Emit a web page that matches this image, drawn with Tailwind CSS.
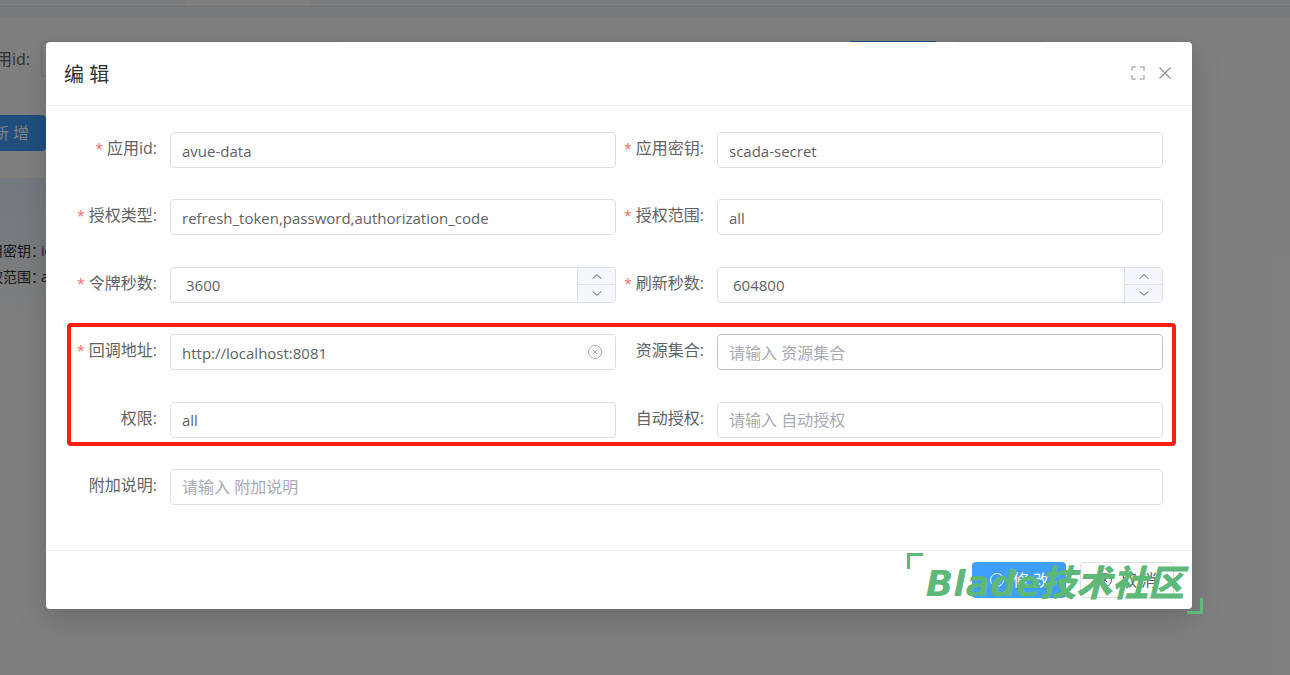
<!DOCTYPE html>
<html lang="zh-CN">
<head>
    <meta charset="UTF-8">
    <meta name="viewport" content="width=device-width, initial-scale=1.0">
    <title>应用管理</title>
    <script src="https://cdn.jsdelivr.net/npm/@tailwindcss/browser@4"></script>
</head>
<body class="relative min-h-screen overflow-hidden bg-white font-['Open_Sans','Noto_Sans_CJK_SC',sans-serif] text-base text-[#606266]">

    <!-- Page behind the dialog -->
    <div class="h-[6px] bg-[#f5f9fd] pl-[185px]">
        <div class="h-[7px] w-[126px] bg-white"></div>
    </div>
    <div class="h-3 border-t border-[#e4e7ed] bg-[#f0f2f5]"></div>
    <main>
        <div class="mt-[23px] flex h-9 items-center justify-between">
            <div class="flex items-center gap-[13px]">
                <label for="searchId" class="-ml-[20px] whitespace-nowrap">应用id:</label>
                <input id="searchId" class="-ml-[2px] h-9 w-[300px] rounded border border-[#dcdfe6]">
            </div>
            <div class="mr-[246px] flex gap-4">
                <button class="h-9 w-[90px] rounded bg-[#409eff] text-white">搜 索</button>
                <button class="h-9 w-[90px] rounded border border-[#dcdfe6]">清 空</button>
            </div>
        </div>
        <button class="mt-[38px] -ml-12 flex h-9 w-[94px] items-center justify-end rounded bg-[#409eff] pr-[17px] whitespace-nowrap text-white">新 增</button>
        <div class="mt-[27px] h-[60px] w-3/4 bg-linear-to-b from-[#eaf3fe] to-[#f0f5fc]"></div>
        <div class="h-[92px] w-3/4 bg-linear-to-b from-[#f0f5fc] to-white text-sm leading-[26px] text-[#303133]">
            <p class="-ml-[11px]"><span class="inline-block w-[52px] whitespace-nowrap">用密钥：</span>id</p>
            <p class="-ml-[11px]"><span class="inline-block w-[52px] whitespace-nowrap">权范围：</span>all</p>
        </div>
    </main>

    <!-- Mask and dialog -->
    <div class="absolute inset-0 bg-black/50 pt-[42px] pr-[98px] pl-[46px]">
        <form class="relative rounded-sm bg-white shadow-[0_12px_32px_4px_rgba(0,0,0,0.08),0_8px_20px_rgba(0,0,0,0.08)]">
            <header class="flex h-16 items-center justify-between border-b border-[#f0f0f0] pr-5 pl-[18px]">
                <h1 class="pt-[3px] text-xl text-[#303133]">编 辑</h1>
                <div class="flex gap-[13px] pb-[2px] text-[#909399]">
                    <button type="button" aria-label="全屏">
                        <svg class="size-[14px]" viewBox="0 0 14 14" fill="none" stroke="#b4b6b9" stroke-width="1.5"><path d="M1 5V1h4M9 1h4v4M13 9v4H9M5 13H1V9"/></svg>
                    </button>
                    <button type="button" aria-label="关闭">
                        <svg class="size-[14px]" viewBox="0 0 14 14" fill="none" stroke="currentColor" stroke-width="1.2"><path d="M1.500 1.500l11 11M12.500 1.500l-11 11"/></svg>
                    </button>
                </div>
            </header>

            <div class="grid min-h-[444px] grid-cols-2 content-between gap-x-px pt-[26px] pr-[29px] pb-[45px] pl-6">
                <div class="flex">
                    <label for="clientId" class="w-[100px] shrink-0 pr-[13px] text-right leading-8"><span class="mr-1 text-sm text-[#f56c6c]">*</span>应用id:</label>
                    <input id="clientId" value="avue-data" class="h-9 w-full min-w-0 rounded border border-[#dcdfe6] px-[11px] pt-px text-[15px] outline-none">
                </div>
                <div class="flex">
                    <label for="clientSecret" class="w-[100px] shrink-0 pr-[13px] text-right leading-8"><span class="mr-1 text-sm text-[#f56c6c]">*</span>应用密钥:</label>
                    <input id="clientSecret" value="scada-secret" class="h-9 w-full min-w-0 rounded border border-[#dcdfe6] px-[11px] pt-px text-[15px] outline-none">
                </div>

                <div class="flex">
                    <label for="grantTypes" class="w-[100px] shrink-0 pr-[13px] text-right leading-8"><span class="mr-1 text-sm text-[#f56c6c]">*</span>授权类型:</label>
                    <input id="grantTypes" value="refresh_token,password,authorization_code" class="h-9 w-full min-w-0 rounded border border-[#dcdfe6] px-[11px] pt-px text-[15px] outline-none">
                </div>
                <div class="flex">
                    <label for="scope" class="w-[100px] shrink-0 pr-[13px] text-right leading-8"><span class="mr-1 text-sm text-[#f56c6c]">*</span>授权范围:</label>
                    <input id="scope" value="all" class="h-9 w-full min-w-0 rounded border border-[#dcdfe6] px-[11px] pt-px text-[15px] outline-none">
                </div>

                <div class="flex">
                    <label for="accessToken" class="w-[100px] shrink-0 pr-[13px] text-right leading-8"><span class="mr-1 text-sm text-[#f56c6c]">*</span>令牌秒数:</label>
                    <div class="flex h-9 w-full min-w-0 overflow-hidden rounded border border-[#dcdfe6]">
                        <input id="accessToken" value="3600" class="w-full min-w-0 px-[15px] pt-px text-[15px] outline-none">
                        <div class="flex w-[38px] shrink-0 flex-col border-l border-[#dcdfe6] bg-[#f5f7fa]">
                            <button type="button" aria-label="增加" class="flex flex-1 items-center justify-center border-b border-[#dcdfe6]"><svg class="h-[5px] w-[10px]" viewBox="0 0 10 5" fill="none" stroke="currentColor"><path d="M.5 4.700L5 .700l4.500 4"/></svg></button>
                            <button type="button" aria-label="减少" class="flex flex-1 items-center justify-center"><svg class="h-[5px] w-[10px]" viewBox="0 0 10 5" fill="none" stroke="currentColor"><path d="M.5 .300L5 4.300l4.500-4"/></svg></button>
                        </div>
                    </div>
                </div>
                <div class="flex">
                    <label for="refreshToken" class="w-[100px] shrink-0 pr-[13px] text-right leading-8"><span class="mr-1 text-sm text-[#f56c6c]">*</span>刷新秒数:</label>
                    <div class="flex h-9 w-full min-w-0 overflow-hidden rounded border border-[#dcdfe6]">
                        <input id="refreshToken" value="604800" class="w-full min-w-0 px-[15px] pt-px text-[15px] outline-none">
                        <div class="flex w-[38px] shrink-0 flex-col border-l border-[#dcdfe6] bg-[#f5f7fa]">
                            <button type="button" aria-label="增加" class="flex flex-1 items-center justify-center border-b border-[#dcdfe6]"><svg class="h-[5px] w-[10px]" viewBox="0 0 10 5" fill="none" stroke="currentColor"><path d="M.5 4.700L5 .700l4.500 4"/></svg></button>
                            <button type="button" aria-label="减少" class="flex flex-1 items-center justify-center"><svg class="h-[5px] w-[10px]" viewBox="0 0 10 5" fill="none" stroke="currentColor"><path d="M.5 .300L5 4.300l4.500-4"/></svg></button>
                        </div>
                    </div>
                </div>

                <div class="flex">
                    <label for="redirectUri" class="w-[100px] shrink-0 pr-[13px] text-right leading-8"><span class="mr-1 text-sm text-[#f56c6c]">*</span>回调地址:</label>
                    <div class="flex h-9 w-full min-w-0 items-center rounded border border-[#dcdfe6] pr-3">
                        <input id="redirectUri" value="http://localhost:8081" class="h-full w-full min-w-0 px-[11px] pt-px text-[15px] outline-none">
                        <button type="button" aria-label="清除" class="shrink-0">
                            <svg class="size-4" viewBox="0 0 16 16" fill="none" stroke="#a8abb2"><circle cx="8" cy="8" r="6.500"/><path d="M5.800 5.800l4.400 4.400M10.200 5.800l-4.400 4.400"/></svg>
                        </button>
                    </div>
                </div>
                <div class="flex">
                    <label for="resourceIds" class="w-[100px] shrink-0 pr-[13px] text-right leading-8">资源集合:</label>
                    <input id="resourceIds" placeholder="请输入 资源集合" class="h-9 w-full min-w-0 rounded border border-[#c0c4cc] px-[11px] pt-px outline-none placeholder:text-[#a8abb2]">
                </div>

                <div class="flex">
                    <label for="authorities" class="w-[100px] shrink-0 pr-[13px] text-right leading-8">权限:</label>
                    <input id="authorities" value="all" class="h-9 w-full min-w-0 rounded border border-[#dcdfe6] px-[11px] pt-px text-[15px] outline-none">
                </div>
                <div class="flex">
                    <label for="autoApprove" class="w-[100px] shrink-0 pr-[13px] text-right leading-8">自动授权:</label>
                    <input id="autoApprove" placeholder="请输入 自动授权" class="h-9 w-full min-w-0 rounded border border-[#dcdfe6] px-[11px] pt-px outline-none placeholder:text-[#a8abb2]">
                </div>

                <div class="col-span-2 flex">
                    <label for="remark" class="w-[100px] shrink-0 pr-[13px] text-right leading-8">附加说明:</label>
                    <input id="remark" placeholder="请输入 附加说明" class="h-9 w-full min-w-0 rounded border border-[#dcdfe6] px-[11px] pt-px outline-none placeholder:text-[#a8abb2]">
                </div>
            </div>

            <footer class="flex justify-end gap-[14px] border-t border-[#f0f0f0] pt-[11px] pr-[18px] pb-[11px]">
                <button type="button" class="flex h-9 w-[94px] items-center justify-center gap-2 rounded bg-[#409eff] text-white">
                    <svg class="size-4 shrink-0" viewBox="0 0 16 16" fill="none" stroke="currentColor"><circle cx="8" cy="8" r="6.500"/><path d="M5 8l2.200 2.200L11 6.300"/></svg>修 改
                </button>
                <button type="button" class="flex h-9 w-[94px] items-center justify-center gap-2 rounded border border-[#dcdfe6]">
                    <svg class="size-4 shrink-0" viewBox="0 0 16 16" fill="none" stroke="currentColor"><circle cx="8" cy="8" r="6.500"/><path d="M5.800 5.800l4.400 4.400M10.200 5.800l-4.400 4.400"/></svg>取 消
                </button>
            </footer>

            <!-- Highlight around the callback settings -->
            <div class="pointer-events-none absolute top-[281px] right-4 left-[21px] h-[123px] rounded border-4 border-[#ff1f10]"></div>

            <!-- Watermark -->
            <div class="pointer-events-none absolute -right-[11px] -bottom-[5px] flex h-[61px] w-[296px] items-center justify-center">
                <span class="absolute top-0 left-0 size-4 border-t-3 border-l-3 border-[#5eb878]"></span>
                <span class="font-['DejaVu_Sans','Noto_Sans_CJK_SC',sans-serif] text-[36px] leading-none font-black whitespace-nowrap text-[#5eb878] italic">Blade技术社区</span>
                <span class="absolute right-0 bottom-0 size-4 border-r-3 border-b-3 border-[#5eb878]"></span>
            </div>
        </form>
    </div>
</body>
</html>
